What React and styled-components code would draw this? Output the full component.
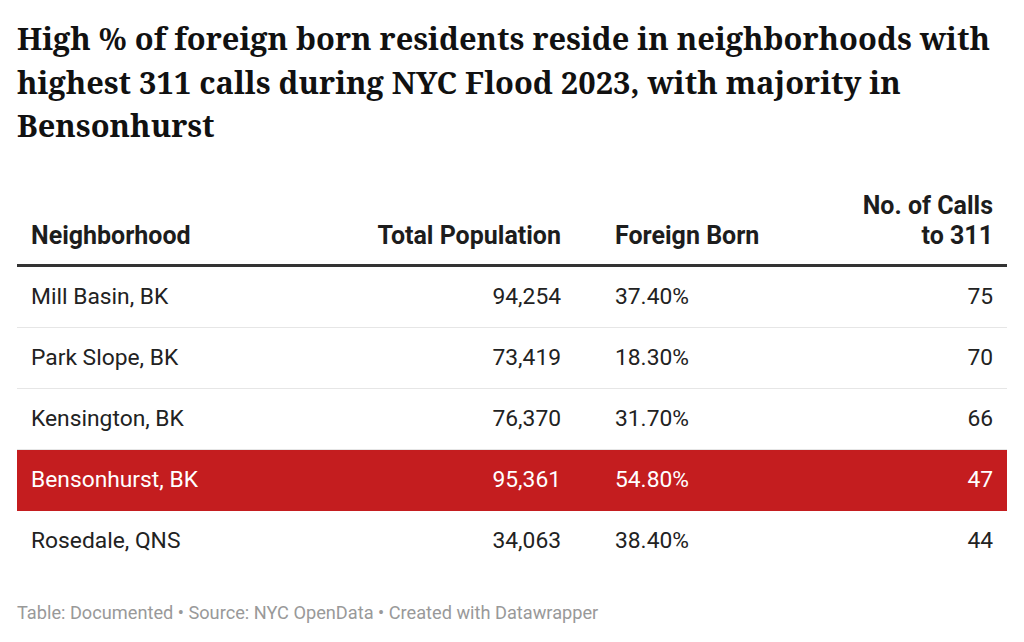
import React from "react";
import styled, { createGlobalStyle } from "styled-components";

const GlobalStyle = createGlobalStyle`
  html, body {
    margin: 0;
    padding: 0;
    background: #ffffff;
  }
`;

const rows = [
  { name: "Mill Basin, BK", population: "94,254", foreign: "37.40%", calls: "75" },
  { name: "Park Slope, BK", population: "73,419", foreign: "18.30%", calls: "70" },
  { name: "Kensington, BK", population: "76,370", foreign: "31.70%", calls: "66" },
  { name: "Bensonhurst, BK", population: "95,361", foreign: "54.80%", calls: "47", highlight: true },
  { name: "Rosedale, QNS", population: "34,063", foreign: "38.40%", calls: "44" },
];

const App = () => {
  return (
    <Wrapper>
      <GlobalStyle />
      <Title>
        High % of foreign born residents reside in neighborhoods with highest 311 calls
        during NYC Flood 2023, with majority in Bensonhurst
      </Title>

      <Table>
        <HeadRow>
          <HeadCell $side="first">Neighborhood</HeadCell>
          <HeadCell $side="inner" $right>Total Population</HeadCell>
          <HeadCell $side="inner">Foreign Born</HeadCell>
          <HeadCell $side="last" $right>
            No. of Calls
            <br />
            to 311
          </HeadCell>
        </HeadRow>

        {rows.map((row) => (
          <Row key={row.name} $highlight={row.highlight}>
            <Cell $side="first">{row.name}</Cell>
            <Cell $side="inner" $right>{row.population}</Cell>
            <Cell $side="inner">{row.foreign}</Cell>
            <Cell $side="last" $right>{row.calls}</Cell>
          </Row>
        ))}
      </Table>

      <Footer>
        Table: Documented • Source: NYC OpenData • Created with Datawrapper
      </Footer>
    </Wrapper>
  );
};

export default App;

const Wrapper = styled.div`
  padding: 17px 17px 0 17px;
  width: 990px;
  font-family: Roboto, "Liberation Sans", sans-serif;
  color: #222;
`;

const Title = styled.h1`
  margin: 0;
  font-family: "Noto Serif", "DejaVu Serif", serif;
  font-weight: 700;
  font-size: 30.8px;
  line-height: 43.5px;
  color: #111;
`;

const Table = styled.div`
  margin-top: 43px;
  display: grid;
  grid-template-columns: 300px 271px 200px 219px;
`;

const HeadRow = styled.div`
  display: contents;
`;

const Row = styled.div`
  display: contents;

  & > div {
    background: ${(p) => (p.$highlight ? "#c41d1f" : "transparent")};
    color: ${(p) => (p.$highlight ? "#ffffff" : "#222")};
    border-bottom: 1px solid ${(p) => (p.$highlight ? "#c41d1f" : "#e6e6e6")};
  }

  &:last-child > div {
    border-bottom: none;
  }
`;

const padding = (side) => {
  if (side === "first") return "0 27px 0 14px";
  if (side === "last") return "0 14px 0 27px";
  return "0 27px";
};

const HeadCell = styled.div`
  display: flex;
  align-items: flex-end;
  justify-content: ${(p) => (p.$right ? "flex-end" : "flex-start")};
  text-align: ${(p) => (p.$right ? "right" : "left")};
  padding: ${(p) => padding(p.$side)};
  padding-bottom: 13px;
  font-size: 25px;
  font-weight: 700;
  line-height: 30px;
  color: #1d1d1d;
  border-bottom: 3px solid #333;
`;

const Cell = styled.div`
  display: flex;
  align-items: center;
  justify-content: ${(p) => (p.$right ? "flex-end" : "flex-start")};
  height: 60px;
  padding: ${(p) => padding(p.$side)};
  font-size: 22.8px;
  font-weight: 400;
`;

const Footer = styled.div`
  margin-top: 31px;
  font-size: 18.2px;
  color: #999;
`;
